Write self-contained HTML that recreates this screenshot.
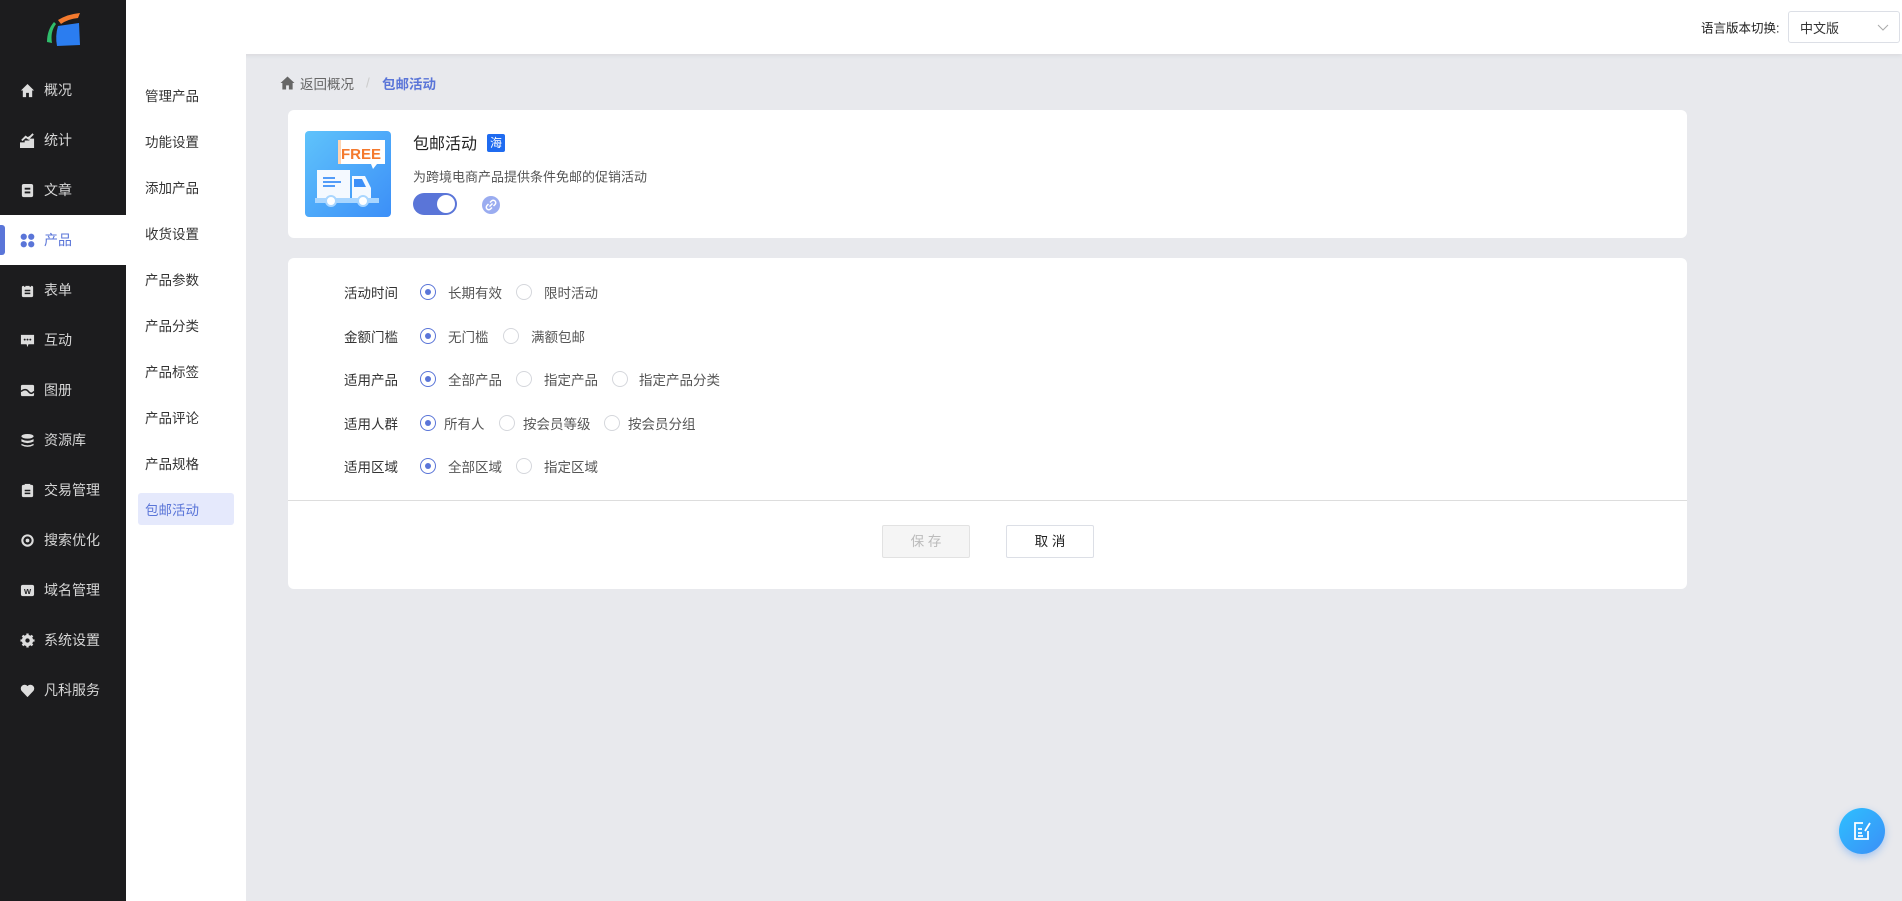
<!DOCTYPE html>
<html><head><meta charset="utf-8"><style>
*{margin:0;padding:0;box-sizing:border-box}
body{width:1902px;height:901px;overflow:hidden;background:#e8e9ed;font-family:"Liberation Sans","Noto Sans CJK SC",sans-serif;position:relative;font-size:14px;color:#333}
.abs{position:absolute}
.side{left:0;top:0;width:126px;height:901px;background:#1c1c1e}
.nav{position:absolute;left:0;width:126px;height:50px;display:flex;align-items:center;color:#d6d6d6;font-size:14px}
.nav .ic{position:absolute;left:20px;width:15px;height:15px}
.nav span{position:absolute;left:44px}
.top{left:126px;top:0;width:1776px;height:54px;background:#fff;box-shadow:0 2px 4px rgba(0,0,0,.06)}
.sub{left:126px;top:54px;width:120px;height:847px;background:#fff}
.si{position:absolute;left:145px;font-size:13.5px;color:#333;transform:translateY(-50%)}
.card{background:#fff;border-radius:6px}
.lbl{position:absolute;left:344px;font-size:13.5px;color:#333;transform:translateY(-50%)}
.rd{position:absolute;width:16px;height:16px;border-radius:50%;border:1px solid #d5d7dc;background:#fff;transform:translate(-50%,-50%)}
.rd.on{border:1.5px solid #5a75d8}
.rd.on::after{content:"";position:absolute;left:3.5px;top:3.5px;width:6px;height:6px;border-radius:50%;background:#5a75d8}
.rt{position:absolute;font-size:13.5px;color:#555;transform:translateY(-50%)}
</style></head><body>
<div class="abs side">
 <svg class="abs" style="left:44px;top:12px" width="38" height="36" viewBox="0 0 38 36"><path d="M10 10 Q3 18 3 30 L8 31 Q6 20 12 12Z" fill="#2fbd6b"/><path d="M14 8 Q24 2 36 1 L34 6 Q24 7 17 12Z" fill="#f47a2e"/><path d="M14 14 L35 11 L36 33 L13 34 Q11 24 14 14Z" fill="#2b7df0"/></svg>
 <div class="nav" style="top:65px"><svg class="ic" viewBox="0 0 16 16"><path d="M8 1 L1 8 H3 V15 H6.5 V10.5 H9.5 V15 H13 V8 H15Z" fill="#ddd"/></svg><span>概况</span></div>
 <div class="nav" style="top:115px"><svg class="ic" viewBox="0 0 16 16"><path d="M1 15V11H4V15ZM6 15V9H9V15ZM11 15V7H14V15ZM2 8 L6 4 L9 6 L14 1" stroke="#ddd" stroke-width="2" fill="#ddd"/></svg><span>统计</span></div>
 <div class="nav" style="top:165px;background:#1c1c1e;border-bottom-right-radius:6px"><svg class="ic" viewBox="0 0 16 16"><rect x="2" y="1" width="12" height="14" rx="2" fill="#ddd"/><path d="M5 6H11M5 10H11" stroke="#1c1c1e" stroke-width="2"/></svg><span>文章</span></div>
 <div class="abs" style="left:0;top:215px;width:126px;height:50px;background:#fff"></div>
 <div class="abs" style="left:0;top:225px;width:5px;height:30px;background:#5a75d8;border-radius:0 3px 3px 0"></div>
 <div class="nav" style="top:215px;color:#5a75d8"><svg class="ic" viewBox="0 0 16 16"><circle cx="4" cy="4" r="3.3" fill="#5a75d8"/><circle cx="12" cy="4" r="3.3" fill="#5a75d8"/><circle cx="4" cy="12" r="3.3" fill="#5a75d8"/><circle cx="12" cy="12" r="3.3" fill="#5a75d8"/></svg><span>产品</span></div>
 <div class="nav" style="top:265px"><svg class="ic" viewBox="0 0 16 16"><rect x="2" y="3" width="12" height="12" rx="1.5" fill="#ddd"/><path d="M5 1V4M11 1V4M5 8H11M5 11H11" stroke="#1c1c1e" stroke-width="1.6"/></svg><span>表单</span></div>
 <div class="nav" style="top:315px"><svg class="ic" viewBox="0 0 16 16"><path d="M1 2H15V12H9L8 15L7 12H1Z" fill="#ddd"/><circle cx="5" cy="7" r="1" fill="#1c1c1e"/><circle cx="8" cy="7" r="1" fill="#1c1c1e"/><circle cx="11" cy="7" r="1" fill="#1c1c1e"/></svg><span>互动</span></div>
 <div class="nav" style="top:365px"><svg class="ic" viewBox="0 0 16 16"><rect x="1" y="2" width="14" height="12" rx="1.5" fill="#ddd"/><path d="M1 9 Q6 5 9 9 T15 9" stroke="#1c1c1e" stroke-width="1.6" fill="none"/></svg><span>图册</span></div>
 <div class="nav" style="top:415px"><svg class="ic" viewBox="0 0 16 16"><ellipse cx="8" cy="3.5" rx="6.5" ry="2.5" fill="#ddd"/><path d="M1.5 6.5Q8 10 14.5 6.5V9Q8 12.5 1.5 9ZM1.5 11.5Q8 15 14.5 11.5V13Q8 16.5 1.5 13Z" fill="#ddd"/></svg><span>资源库</span></div>
 <div class="nav" style="top:465px"><svg class="ic" viewBox="0 0 16 16"><rect x="2" y="2" width="12" height="13" rx="1.5" fill="#ddd"/><path d="M5 1H11V4H5Z" fill="#ddd"/><path d="M5 8H11M5 11H11" stroke="#1c1c1e" stroke-width="1.6"/></svg><span>交易管理</span></div>
 <div class="nav" style="top:515px"><svg class="ic" viewBox="0 0 16 16"><circle cx="8" cy="8" r="5.5" stroke="#ddd" stroke-width="2.2" fill="none"/><circle cx="8" cy="8" r="2" fill="#ddd"/></svg><span>搜索优化</span></div>
 <div class="nav" style="top:565px"><svg class="ic" viewBox="0 0 16 16"><rect x="1" y="2" width="14" height="12" rx="2" fill="#ddd"/><text x="8" y="11.5" font-size="8" font-weight="bold" text-anchor="middle" fill="#1c1c1e" font-family="Liberation Sans">W</text></svg><span>域名管理</span></div>
 <div class="nav" style="top:615px"><svg class="ic" viewBox="0 0 16 16"><circle cx="8" cy="8" r="6" fill="#ddd"/><path d="M8 0.5V15.5M0.5 8H15.5M2.7 2.7L13.3 13.3M13.3 2.7L2.7 13.3" stroke="#ddd" stroke-width="2.5"/><circle cx="8" cy="8" r="2.3" fill="#1c1c1e"/></svg><span>系统设置</span></div>
 <div class="nav" style="top:665px"><svg class="ic" viewBox="0 0 16 16"><path d="M8 15L1.8 8.5A3.8 3.8 0 0 1 8 3.3A3.8 3.8 0 0 1 14.2 8.5Z" fill="#ddd"/></svg><span>凡科服务</span></div>
</div>
<div class="abs top"></div>
<div class="abs" style="left:1701px;top:27px;transform:translateY(-50%);font-size:12.5px;color:#222">语言版本切换:</div>
<div class="abs" style="left:1788px;top:11px;width:112px;height:32px;border:1px solid #dcdfe6;border-radius:3px;background:#fff">
 <span class="abs" style="left:11px;top:6px;font-size:13px;color:#333">中文版</span>
 <svg class="abs" style="left:88px;top:12px" width="12" height="8" viewBox="0 0 12 8"><path d="M1 1L6 6L11 1" stroke="#aaa" fill="none"/></svg>
</div>
<div class="abs sub"></div>
<div class="si" style="top:95px">管理产品</div>
<div class="si" style="top:141px">功能设置</div>
<div class="si" style="top:187px">添加产品</div>
<div class="si" style="top:233px">收货设置</div>
<div class="si" style="top:279px">产品参数</div>
<div class="si" style="top:325px">产品分类</div>
<div class="si" style="top:371px">产品标签</div>
<div class="si" style="top:417px">产品评论</div>
<div class="si" style="top:463px">产品规格</div>
<div class="abs" style="left:138px;top:493px;width:96px;height:32px;background:#e5e9fc;border-radius:3px"></div>
<div class="si" style="top:509px;color:#5a75d8">包邮活动</div>

<svg class="abs" style="left:280px;top:76px" width="15" height="14" viewBox="0 0 16 15"><path d="M8 0.5L0.5 7.5H2.5V14.5H6.5V10H9.5V14.5H13.5V7.5H15.5Z" fill="#666"/></svg>
<div class="abs" style="left:300px;top:83px;transform:translateY(-50%);font-size:13.5px;color:#666">返回概况</div>
<div class="abs" style="left:366px;top:83px;transform:translateY(-50%);font-size:13.5px;color:#ccc">/</div>
<div class="abs" style="left:382px;top:83px;transform:translateY(-50%);font-size:13.5px;color:#5a75d8;font-weight:bold">包邮活动</div>

<div class="abs card" style="left:288px;top:110px;width:1399px;height:128px"></div>
<svg class="abs" style="left:305px;top:131px" width="86" height="86" viewBox="0 0 86 86">
 <defs><linearGradient id="g" x1="0" y1="0" x2="1" y2="1"><stop offset="0" stop-color="#5fc3fb"/><stop offset="1" stop-color="#3c8ff8"/></linearGradient></defs>
 <rect width="86" height="86" rx="4" fill="url(#g)"/>
 <path d="M33 9H80V33H72L68 38L66 33H33Z" fill="#fff"/><rect x="33" y="9" width="3" height="24" fill="#ffd3b0"/>
 <text x="56" y="28" font-size="15" font-weight="bold" fill="#f47a2e" text-anchor="middle" font-family="Liberation Sans">FREE</text>
 <rect x="12" y="39" width="33" height="30" fill="#f4f9ff"/><path d="M47 45H60L66 57V69H47Z" fill="#f4f9ff"/>
 <path d="M49 48H57L61 56H49Z" fill="#3c8ff8"/>
 <path d="M18 47H30M18 51H36M18 55H30" stroke="#3c8ff8" stroke-width="1.8"/>
 <rect x="10" y="67" width="64" height="5" fill="#a9d6ff"/>
 <circle cx="26" cy="70" r="5" fill="#fff" stroke="#a9d6ff" stroke-width="2"/><circle cx="58" cy="70" r="5" fill="#fff" stroke="#a9d6ff" stroke-width="2"/>
</svg>
<div class="abs" style="left:413px;top:142px;transform:translateY(-50%);font-size:16px;color:#222">包邮活动</div>
<div class="abs" style="left:487px;top:134px;width:18px;height:18px;background:#1f6bf0;color:#fff;font-size:12px;text-align:center;line-height:18px;border-radius:2px">海</div>
<div class="abs" style="left:413px;top:176px;transform:translateY(-50%);font-size:13px;color:#555">为跨境电商产品提供条件免邮的促销活动</div>
<div class="abs" style="left:413px;top:193px;width:44px;height:22px;border-radius:11px;background:#5a75d8"><div class="abs" style="left:24px;top:2px;width:18px;height:18px;border-radius:50%;background:#fff"></div></div>
<svg class="abs" style="left:482px;top:196px" width="18" height="18" viewBox="0 0 18 18"><circle cx="9" cy="9" r="9" fill="#9aacf0"/><path d="M7.5 10.5L10.5 7.5M8 6.5L9.5 5A2 2 0 0 1 13 8.5L11.5 10M10 11.5L8.5 13A2 2 0 0 1 5 9.5L6.5 8" stroke="#fff" stroke-width="1.5" fill="none"/></svg>

<div class="abs card" style="left:288px;top:258px;width:1399px;height:331px"></div>
<div class="abs" style="left:288px;top:500px;width:1399px;height:1px;background:#ddd"></div>

<div class="lbl" style="top:292px">活动时间</div>
<div class="rd on" style="left:428px;top:292px"></div><div class="rt" style="left:448px;top:292px">长期有效</div>
<div class="rd" style="left:524px;top:292px"></div><div class="rt" style="left:544px;top:292px">限时活动</div>

<div class="lbl" style="top:336px">金额门槛</div>
<div class="rd on" style="left:428px;top:336px"></div><div class="rt" style="left:448px;top:336px">无门槛</div>
<div class="rd" style="left:511px;top:336px"></div><div class="rt" style="left:531px;top:336px">满额包邮</div>

<div class="lbl" style="top:379px">适用产品</div>
<div class="rd on" style="left:428px;top:379px"></div><div class="rt" style="left:448px;top:379px">全部产品</div>
<div class="rd" style="left:524px;top:379px"></div><div class="rt" style="left:544px;top:379px">指定产品</div>
<div class="rd" style="left:620px;top:379px"></div><div class="rt" style="left:639px;top:379px">指定产品分类</div>

<div class="lbl" style="top:423px">适用人群</div>
<div class="rd on" style="left:428px;top:423px"></div><div class="rt" style="left:444px;top:423px">所有人</div>
<div class="rd" style="left:507px;top:423px"></div><div class="rt" style="left:523px;top:423px">按会员等级</div>
<div class="rd" style="left:612px;top:423px"></div><div class="rt" style="left:628px;top:423px">按会员分组</div>

<div class="lbl" style="top:466px">适用区域</div>
<div class="rd on" style="left:428px;top:466px"></div><div class="rt" style="left:448px;top:466px">全部区域</div>
<div class="rd" style="left:524px;top:466px"></div><div class="rt" style="left:544px;top:466px">指定区域</div>

<div class="abs" style="left:882px;top:525px;width:88px;height:33px;border:1px solid #e2e2e2;background:#f5f5f5;color:#bbb;font-size:13.5px;text-align:center;line-height:31px;border-radius:2px">保 存</div>
<div class="abs" style="left:1006px;top:525px;width:88px;height:33px;border:1px solid #dcdfe6;background:#fff;color:#222;font-size:13.5px;text-align:center;line-height:31px;border-radius:2px">取 消</div>

<div class="abs" style="left:1839px;top:808px;width:46px;height:46px;border-radius:50%;background:linear-gradient(135deg,#2ec0ff,#3b8ff7);box-shadow:0 3px 8px rgba(59,143,247,.4)"></div>
<svg class="abs" style="left:1851px;top:820px" width="22" height="22" viewBox="0 0 22 22"><path d="M12 3H4V19H17V11" stroke="#fff" stroke-width="1.8" fill="none"/><path d="M7 9H11M7 13H11M7 16H12M14 11L19 3" stroke="#fff" stroke-width="1.8"/></svg>
</body></html>
